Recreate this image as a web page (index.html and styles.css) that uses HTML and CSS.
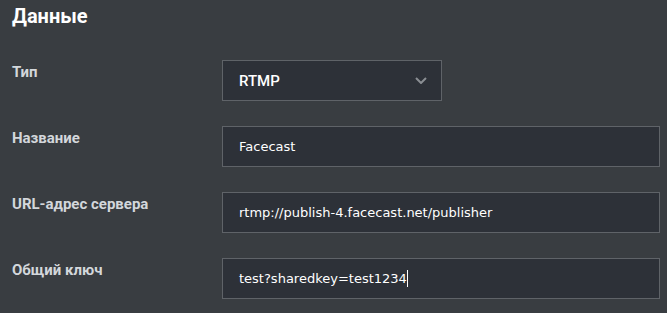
FILE: index.html
```html
<!DOCTYPE html>
<html lang="ru">
<head>
    <meta charset="UTF-8">
    <meta name="viewport" content="width=device-width, initial-scale=1.0">
    <title>Данные</title>
    <link rel="stylesheet" href="styles.css">
</head>
<body>
    <div class="panel">
        <h2>Данные</h2>
        <div class="form">
            <div class="form-row">
                <label>Тип</label>
                <div class="select">
                    <span>RTMP</span>
                    <svg width="12" height="7" viewBox="0 0 12 7"><path d="M1 1l5 5 5-5" fill="none" stroke="#8a8e93" stroke-width="2"/></svg>
                </div>
            </div>
            <div class="form-row">
                <label>Название</label>
                <div class="field">Facecast</div>
            </div>
            <div class="form-row">
                <label>URL-адрес сервера</label>
                <div class="field">rtmp://publish-4.facecast.net/publisher</div>
            </div>
            <div class="form-row">
                <label>Общий ключ</label>
                <div class="field">test?sharedkey=test1234<span class="caret"></span></div>
            </div>
        </div>
    </div>
</body>
</html>
```

FILE: styles.css
```css
body {
    margin: 0;
    padding: 0;
    background: #393d41;
    font-family: Roboto, 'Liberation Sans', sans-serif;
}

.panel {
    padding: 3px 7px 0 12px;
}

h2 {
    margin: 0;
    font-size: 20px;
    font-weight: bold;
    color: #fff;
    line-height: 26px;
}

.form {
    margin-top: 31px;
    display: flex;
    flex-direction: column;
    gap: 25px;
}

.form-row {
    display: grid;
    grid-template-columns: 210px 1fr;
}

label {
    font-size: 15px;
    font-weight: bold;
    color: #d3d7db;
    padding-top: 3px;
    line-height: 18px;
}

.select,
.field {
    height: 41px;
    box-sizing: border-box;
    border: 1px solid #5f6368;
    background: #2d3138;
    color: #fff;
    display: flex;
    align-items: center;
    padding: 0 16px;
}

.select {
    width: 220px;
    justify-content: space-between;
    font-size: 15px;
    font-weight: 500;
    padding-right: 14px;
}

.field {
    font-family: 'DejaVu Sans', sans-serif;
    font-size: 13px;
}

.caret {
    display: inline-block;
    width: 1px;
    height: 17px;
    background: #fff;
}
```
